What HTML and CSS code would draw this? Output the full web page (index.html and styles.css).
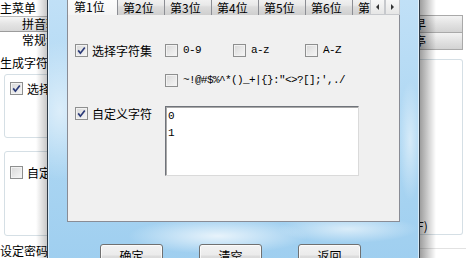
FILE: index.html
```html
<!DOCTYPE html>
<html lang="zh-CN">
<head>
  <meta charset="UTF-8" />
  <title>生成字符</title>
  <link rel="stylesheet" href="styles.css">
</head>
<body>
  <div class="desktop">
    <div class="main-window">
      <div class="main-left">
        <div class="menu-title">主菜单</div>
        <div class="side-tab side-tab-gray">拼音输入</div>
        <div class="side-tab">常规设置</div>
        <div class="section-title">生成字符</div>
        <div class="group group-one">
          <label class="check-row">
            <span class="checkbox"><svg viewBox="0 0 13 13" width="13" height="13"><path d="M3.2 6.4 L5.4 9.2 L9.8 3.4" fill="none" stroke="#2b3a78" stroke-width="1.7"/></svg></span>
            <span>选择字符集</span>
          </label>
        </div>
        <div class="group group-two">
          <label class="check-row">
            <span class="checkbox"></span>
            <span>自定义字符</span>
          </label>
        </div>
        <div class="section-title bottom-title">设定密码</div>
      </div>
      <div class="main-gap"></div>
      <div class="main-right">
        <div class="right-tab">早</div>
        <div class="right-tab right-tab-second">亭</div>
        <div class="right-group">
          <span class="right-hint">(F)</span>
        </div>
        <div class="right-line"></div>
      </div>
    </div>

    <div class="shadow-left"></div>
    <div class="shadow-right"></div>

    <div class="dialog">
      <div class="tab-strip">
        <div class="tab tab-active">第1位</div>
        <div class="tab">第2位</div>
        <div class="tab">第3位</div>
        <div class="tab">第4位</div>
        <div class="tab">第5位</div>
        <div class="tab">第6位</div>
        <div class="tab">第7位</div>
        <div class="tab-scroll">
          <span class="scroll-btn"><svg viewBox="0 0 5 6" width="5" height="6"><path d="M4 0 L1 3 L4 6 Z" fill="#333"/></svg></span>
          <span class="scroll-btn"><svg viewBox="0 0 5 6" width="5" height="6"><path d="M1 0 L4 3 L1 6 Z" fill="#333"/></svg></span>
        </div>
      </div>

      <div class="panel">
        <div class="panel-row row-charset">
          <label class="check-row">
            <span class="checkbox"><svg viewBox="0 0 13 13" width="13" height="13"><path d="M3.2 6.4 L5.4 9.2 L9.8 3.4" fill="none" stroke="#2b3a78" stroke-width="1.7"/></svg></span>
            <span>选择字符集</span>
          </label>
          <div class="options">
            <label class="check-row option option-wide"><span class="checkbox"></span><span class="mono">0-9</span></label>
            <label class="check-row option option-wider"><span class="checkbox"></span><span class="mono">a-z</span></label>
            <label class="check-row option"><span class="checkbox"></span><span class="mono">A-Z</span></label>
          </div>
        </div>
        <div class="panel-row row-symbols">
          <div></div>
          <label class="check-row option"><span class="checkbox"></span><span class="mono">~!@#$%^*()_+|{}:"&lt;&gt;?[];',./</span></label>
        </div>
        <div class="panel-row row-custom">
          <label class="check-row custom-check">
            <span class="checkbox"><svg viewBox="0 0 13 13" width="13" height="13"><path d="M3.2 6.4 L5.4 9.2 L9.8 3.4" fill="none" stroke="#2b3a78" stroke-width="1.7"/></svg></span>
            <span>自定义字符</span>
          </label>
          <div class="text-box">0<br>1</div>
        </div>
      </div>

      <div class="button-row">
        <button class="btn">确定</button>
        <button class="btn">清空</button>
        <button class="btn">返回</button>
      </div>
    </div>
  </div>
</body>
</html>
```

FILE: styles.css
```css
body {
  margin: 0;
  font-family: "Noto Sans CJK SC", "Noto Sans", sans-serif;
  font-size: 12px;
  color: #000;
}
.desktop {
  position: relative;
  width: 466px;
  height: 258px;
  overflow: hidden;
  background: #fff;
}

/* main window behind the dialog */
.main-window {
  display: grid;
  grid-template-columns: 200px 210px 56px;
  height: 258px;
}
.main-left {
  display: flex;
  flex-direction: column;
  overflow: hidden;
}
.menu-title {
  height: 17px;
  line-height: 15px;
}
.side-tab {
  height: 15px;
  line-height: 15px;
  padding-left: 22px;
}
.side-tab-gray {
  height: 14px;
  line-height: 14px;
  background: linear-gradient(#f6f6f6, #e4e4e4 50%, #d8d8d8);
  border-top: 1px solid #b9b9b9;
  border-bottom: 1px solid #9c9c9c;
}
.section-title {
  margin-top: 8px;
  height: 15px;
  line-height: 15px;
}
.group {
  margin-left: 4px;
  border: 1px solid #d5dfe5;
  border-radius: 3px;
  padding-left: 5px;
}
.group-one {
  margin-top: 4px;
  height: 58px;
  padding-top: 7px;
}
.group-two {
  margin-top: 13px;
  height: 72px;
  padding-top: 14px;
}
.bottom-title {
  margin-top: 7px;
}

.main-right {
  display: flex;
  flex-direction: column;
}
.right-tab {
  margin-top: 15px;
  width: 48px;
  height: 16px;
  line-height: 16px;
  padding-left: 4px;
  box-sizing: content-box;
  background: linear-gradient(#f3f3f3, #e2e2e2 50%, #d3d3d3);
  border: 1px solid #a9a9a9;
  border-left: none;
  overflow: hidden;
}
.right-tab-second {
  margin-top: 0;
  height: 16px;
  border-top: none;
}
.right-group {
  margin-top: 9px;
  width: 53px;
  height: 176px;
  border: 1px solid #d5dfe5;
  border-left: none;
  border-radius: 0 3px 3px 0;
  display: flex;
  align-items: flex-end;
  padding-left: 3px;
  box-sizing: border-box;
}
.right-hint {
  line-height: 15px;
  margin-bottom: 1px;
}
.right-line {
  margin-top: 13px;
  border-top: 1px solid #e2e2e2;
}

.shadow-left {
  position: absolute;
  left: 36px;
  top: 0;
  width: 11px;
  height: 258px;
  background: linear-gradient(90deg, rgba(0, 0, 0, 0), rgba(0, 0, 0, 0.22));
}
.shadow-right {
  position: absolute;
  left: 420px;
  top: 0;
  width: 16px;
  height: 258px;
  background: linear-gradient(90deg, rgba(0, 0, 0, 0.38), rgba(0, 0, 0, 0));
}

/* dialog window */
.dialog {
  position: absolute;
  left: 47px;
  top: -40px;
  width: 373px;
  height: 330px;
  box-sizing: border-box;
  border: 1px solid #2f3b47;
  box-shadow: inset 0 0 0 1px rgba(255, 255, 255, 0.55);
  padding: 33px 19px 0 19px;
  background:
    radial-gradient(ellipse 40px 70px at 12px 150px, rgba(255, 255, 255, 0.55), rgba(255, 255, 255, 0)),
    radial-gradient(ellipse 90px 18px at 170px 275px, rgba(255, 255, 255, 0.75), rgba(255, 255, 255, 0)),
    radial-gradient(ellipse 70px 14px at 300px 268px, rgba(255, 255, 255, 0.6), rgba(255, 255, 255, 0)),
    radial-gradient(ellipse 12px 60px at 362px 180px, rgba(255, 255, 255, 0.5), rgba(255, 255, 255, 0)),
    linear-gradient(#c6e3f8, #aad5f2 60%, #9ccdef);
}
.tab-strip {
  position: relative;
  display: flex;
  align-items: flex-end;
  height: 21px;
  overflow: hidden;
  z-index: 1;
}
.tab {
  flex: none;
  width: 48px;
  height: 19px;
  box-sizing: border-box;
  margin-left: -1px;
  padding: 3px 0 0 5px;
  line-height: 16px;
  border: 1px solid #8c8e94;
  border-bottom: none;
  border-radius: 2px 2px 0 0;
  background: linear-gradient(#f4f4f4, #e9e9e9 45%, #dcdcdc 55%, #cfcfcf);
  white-space: nowrap;
  overflow: hidden;
}
.tab-active {
  width: 51px;
  height: 22px;
  margin-left: 0;
  padding-top: 5px;
  padding-left: 6px;
  background: linear-gradient(#ffffff, #f4f4f4);
  position: relative;
  z-index: 2;
}
.tab-scroll {
  position: absolute;
  right: 0;
  bottom: 0;
  display: flex;
  background: #f0f0f0;
}
.scroll-btn {
  width: 15px;
  height: 16px;
  box-sizing: border-box;
  border: 1px solid #c7c9cd;
  background: linear-gradient(#f7f7f7, #e6e6e6);
  display: flex;
  align-items: center;
  justify-content: center;
}
.panel {
  height: 208px;
  box-sizing: border-box;
  margin-top: -1px;
  border: 1px solid #898c95;
  background: #f0f0f0;
  padding-left: 7px;
}
.panel-row {
  display: grid;
  grid-template-columns: 90px 1fr;
}
.row-charset {
  margin-top: 29px;
}
.row-symbols {
  margin-top: 17px;
}
.row-custom {
  margin-top: 19px;
  align-items: start;
}
.custom-check {
  margin-top: 1px;
}
.check-row {
  display: flex;
  align-items: center;
  gap: 4px;
  height: 13px;
  line-height: 15px;
  white-space: nowrap;
}
.checkbox {
  flex: none;
  display: block;
  width: 13px;
  height: 13px;
  box-sizing: border-box;
  border: 1px solid #8e8f8f;
  background: linear-gradient(135deg, #d8d8d8, #f7f7f7);
  box-shadow: inset 0 0 0 1px #f2f2f2;
  position: relative;
}
.checkbox svg {
  position: absolute;
  left: -1px;
  top: -1px;
}
.options {
  display: flex;
}
.option {
  gap: 5px;
}
.option-wide {
  width: 68px;
}
.option-wider {
  width: 72px;
}
.mono {
  font-family: "Liberation Mono", monospace;
  font-size: 11px;
  letter-spacing: -0.6px;
}
.text-box {
  width: 194px;
  height: 70px;
  box-sizing: border-box;
  border: 1px solid;
  border-color: #6f737a #dadada #dadada #6f737a;
  box-shadow: inset 1px 1px 0 #a9a9a9;
  background: #fff;
  padding: 1px 0 0 2px;
  font-family: "Liberation Mono", monospace;
  font-size: 11px;
  line-height: 17px;
}
.button-row {
  display: flex;
  gap: 36px;
  margin-top: 22px;
  padding-left: 33px;
}
.btn {
  width: 63px;
  height: 23px;
  padding: 0;
  border: 1px solid #707070;
  border-radius: 3px;
  background: linear-gradient(#f2f2f2, #ebebeb 48%, #dddddd 52%, #cfcfcf);
  box-shadow: inset 0 0 0 1px rgba(255, 255, 255, 0.7);
  font-family: "Noto Sans CJK SC", sans-serif;
  font-size: 12px;
  line-height: 15px;
  color: #000;
}
```
